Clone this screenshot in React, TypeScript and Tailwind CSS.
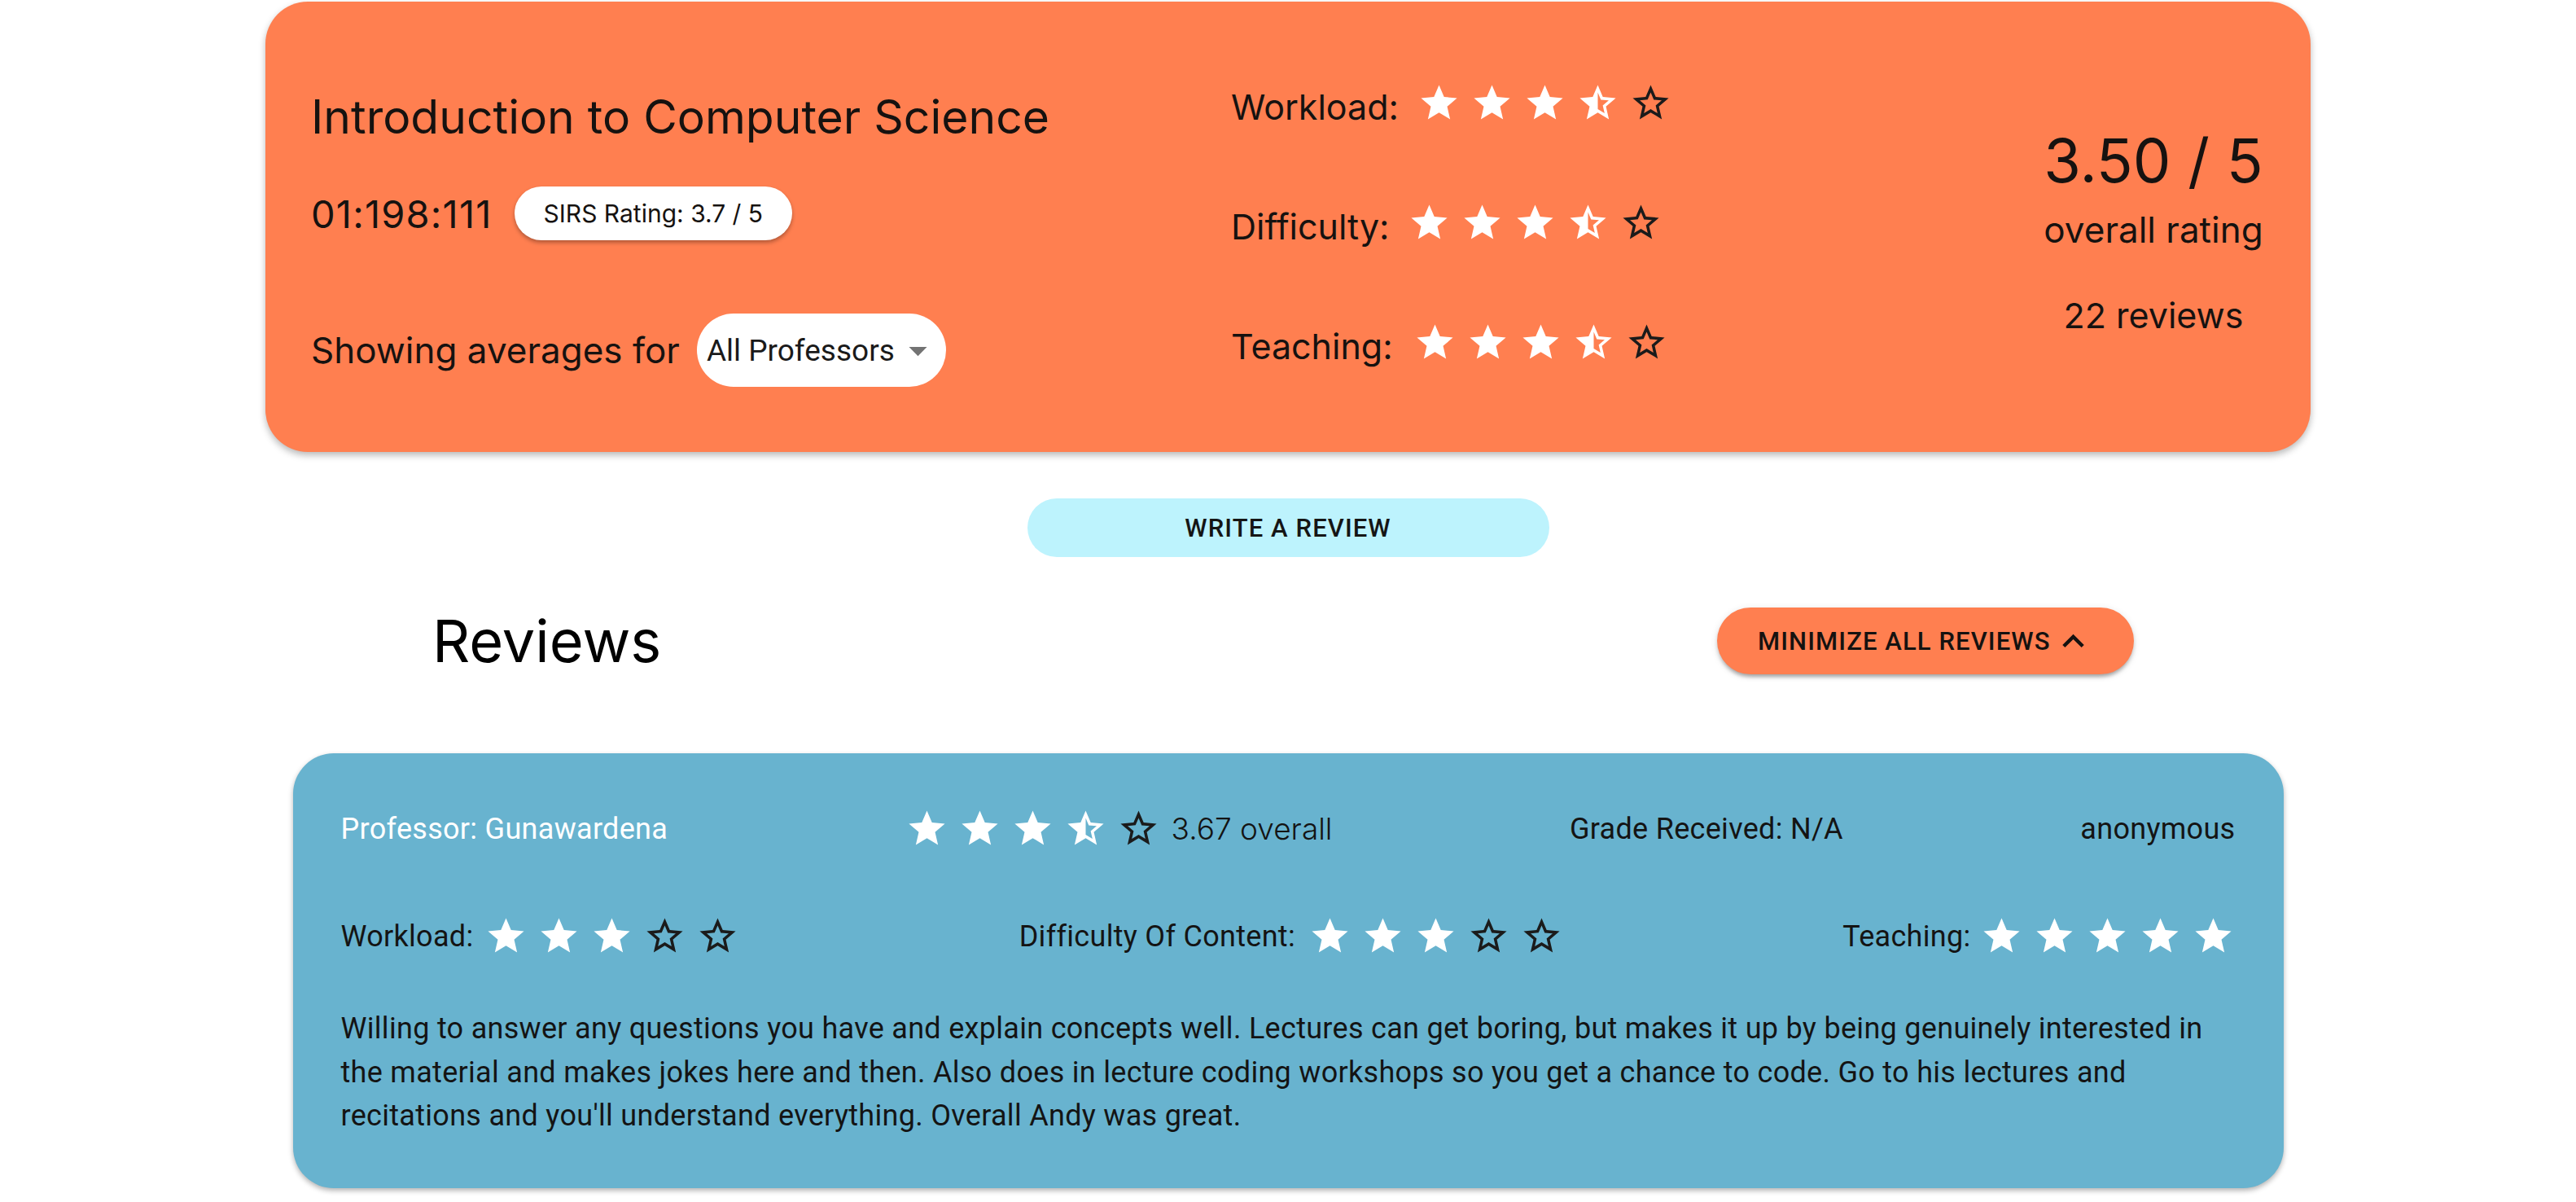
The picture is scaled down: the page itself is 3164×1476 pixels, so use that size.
import { MdStar, MdStarHalf, MdStarBorder, MdExpandLess } from "react-icons/md"

const Stars = ({ value, dark = "text-[#1b1b1b]" }: { value: number; dark?: string }) => {
    return (
        <div className="flex gap-[12px]">
            {[1, 2, 3, 4, 5].map((i) => {
                if (value >= i) return <MdStar key={i} size={53} className="text-white" />
                if (value >= i - 0.5) return <MdStarHalf key={i} size={53} className="text-white" />
                return <MdStarBorder key={i} size={53} className={dark} />
            })}
        </div>
    )
}

const CourseCard = () => {
    return (
        <div className="mx-auto mt-[2px] flex h-[553px] w-[2512px] rounded-[52px] bg-[#FF7F50] pl-[56px] pr-[3px] text-[#161210] shadow-[0_4px_8px_rgba(0,0,0,0.28)] font-['Inter',sans-serif]">
            <div className="flex w-[1130px] flex-col">
                <h1 className="mt-[113px] text-[57px] leading-none">Introduction to Computer Science</h1>
                <div className="mt-[57px] flex h-[66px] items-center">
                    <span className="text-[47px] leading-none tracking-[1.2px]">01:198:111</span>
                    <span className="ml-[27px] flex h-[66px] items-center rounded-full bg-white px-[36px] text-[30px] leading-none shadow-[0_3px_5px_rgba(0,0,0,0.3)]">
                        SIRS Rating: 3.7 / 5
                    </span>
                </div>
                <div className="mt-[90px] flex h-[90px] items-center">
                    <span className="text-[44px] leading-none">Showing averages for</span>
                    <div className="ml-[21px] flex h-[90px] w-[306px] items-center rounded-full bg-white pl-[12px]">
                        <span className="font-['Roboto',sans-serif] text-[37px] leading-none text-[#1a1a1a]">All Professors</span>
                        <svg viewBox="0 0 24 24" className="ml-[2px] h-[53px] w-[53px] fill-black/55">
                            <path d="M7 10l5 5 5-5z" />
                        </svg>
                    </div>
                </div>
            </div>
            <div className="flex flex-1 flex-col">
                <div className="mt-[98px] flex h-[53px] items-center">
                    <span className="mt-[10px] text-[43px] leading-none">Workload:</span>
                    <div className="ml-[23px]">
                        <Stars value={3.5} />
                    </div>
                </div>
                <div className="mt-[94px] flex h-[53px] items-center">
                    <span className="mt-[10px] text-[43px] leading-none">Difficulty:</span>
                    <div className="ml-[22px]">
                        <Stars value={3.5} />
                    </div>
                </div>
                <div className="mt-[94px] flex h-[53px] items-center">
                    <span className="mt-[10px] text-[43px] leading-none">Teaching:</span>
                    <div className="ml-[25px]">
                        <Stars value={3.5} />
                    </div>
                </div>
            </div>
            <div className="flex w-[380px] flex-col items-center">
                <p className="mt-[158px] text-[74px] leading-none">3.50 / 5</p>
                <p className="mt-[26px] text-[44px] leading-none">overall rating</p>
                <p className="mt-[62px] text-[43px] leading-none">22 reviews</p>
            </div>
        </div>
    )
}

const ReviewCard = () => {
    return (
        <div className="mx-auto mt-[97px] h-[534px] w-[2445px] rounded-[50px] bg-[#68B3CF] px-[59px] pt-[66px] text-[36px] tracking-[0.3px] text-[#141414] shadow-[0_3px_6px_rgba(0,0,0,0.3)] font-['Roboto',sans-serif]">
            <div className="flex h-[53px] items-center justify-between">
                <span className="text-white">Professor: Gunawardena</span>
                <div className="flex items-center gap-[14px]">
                    <Stars value={3.67} />
                    <span className="font-['Inter',sans-serif] text-[37px] font-light tracking-normal">3.67 overall</span>
                </div>
                <span>Grade Received: N/A</span>
                <span>anonymous</span>
            </div>
            <div className="mt-[79px] flex h-[53px] items-center justify-between">
                <div className="flex items-center gap-[14px]">
                    <span>Workload:</span>
                    <Stars value={3} />
                </div>
                <div className="flex items-center gap-[16px]">
                    <span>Difficulty Of Content:</span>
                    <Stars value={3} />
                </div>
                <div className="flex items-center gap-[12px]">
                    <span>Teaching:</span>
                    <Stars value={5} />
                </div>
            </div>
            <p className="mt-[61px] leading-[53.5px]">
                Willing to answer any questions you have and explain concepts well. Lectures can get boring, but makes it up by being genuinely interested in the material and makes jokes here and then. Also does in lecture coding workshops so you get a chance to code. Go to his lectures and recitations and you'll understand everything. Overall Andy was great.
            </p>
        </div>
    )
}

const App = () => {
    return (
        <div className="min-h-screen w-full bg-white pb-[20px]">
            <CourseCard />
            <div className="mt-[57px] flex justify-center">
                <button className="flex h-[72px] w-[641px] items-center justify-center rounded-full bg-[#BDF3FD] font-['Roboto',sans-serif] text-[31px] font-medium uppercase leading-none tracking-[1.1px] text-[#151515]">
                    Write a review
                </button>
            </div>
            <div className="ml-[531px] mt-[62px] flex h-[82px] w-[2090px] items-center justify-between">
                <h2 className="font-['Inter',sans-serif] text-[72px] leading-none text-black">Reviews</h2>
                <button className="flex h-[82px] w-[512px] items-center rounded-full bg-[#FF7F50] pl-[50px] font-['Roboto',sans-serif] text-[31px] font-medium uppercase leading-none tracking-[1.1px] text-[#151210] shadow-[0_6px_4px_-4px_rgba(0,0,0,0.2),0_4px_4px_rgba(0,0,0,0.14),0_2px_10px_rgba(0,0,0,0.12)]">
                    Minimize all reviews
                    <MdExpandLess size={53} className="ml-[1px]" />
                </button>
            </div>
            <ReviewCard />
        </div>
    )
}

export default App
